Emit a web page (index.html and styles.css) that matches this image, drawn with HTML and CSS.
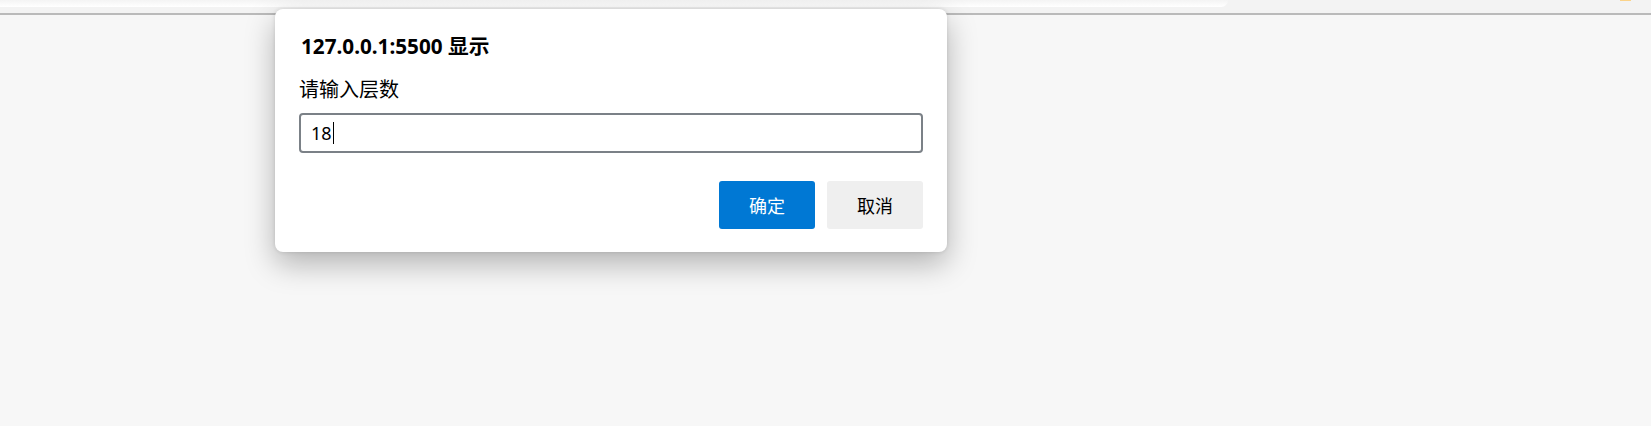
FILE: index.html
```html
<!DOCTYPE html>
<html lang="zh-CN">
<head>
    <meta charset="UTF-8">
    <meta name="viewport" content="width=device-width, initial-scale=1.0">
    <title>层数</title>
    <link rel="stylesheet" href="styles.css">
</head>
<body>
    <div class="topbar">
        <div class="tab-piece"></div>
        <div class="tab-rest"><span class="mark"></span></div>
    </div>
    <div class="page"></div>

    <!-- prompt() dialog -->
    <div class="dialog">
        <div class="dialog-title">127.0.0.1:5500 显示</div>
        <div class="dialog-label">请输入层数</div>
        <div class="dialog-input">
            <span class="value">18</span><span class="caret"></span>
        </div>
        <div class="dialog-buttons">
            <button class="btn btn-ok">确定</button>
            <button class="btn btn-cancel">取消</button>
        </div>
    </div>
</body>
</html>
```

FILE: styles.css
```css
body {
    margin: 0;
    height: 100vh;
    background-color: #f7f7f7;
    font-family: "Noto Sans", "Noto Sans CJK SC", sans-serif;
    overflow: hidden;
}

.topbar {
    display: flex;
    height: 13px;
    border-bottom: 2px solid #bababa;
    background-color: #f3f3f3;
}

.tab-piece {
    width: 1228px;
    height: 7px;
    background: linear-gradient(#f4f4f4, #ffffff);
    border-bottom-right-radius: 8px;
}

.tab-rest {
    flex: 1;
    position: relative;
}

.mark {
    position: absolute;
    left: 392px;
    top: 0;
    width: 11px;
    height: 1px;
    background-color: #fbd38a;
}

.dialog {
    position: absolute;
    left: 275px;
    top: 9px;
    height: 243px;
    box-sizing: border-box;
    width: 672px;
    padding: 0 24px;
    background-color: #ffffff;
    border-radius: 8px;
    box-shadow: 0 12px 30px rgba(0, 0, 0, 0.28), 0 0 4px rgba(0, 0, 0, 0.12);
    display: flex;
    flex-direction: column;
}

.dialog-title {
    margin-top: 24px;
    font-size: 20.7px;
    line-height: 26px;
    font-weight: bold;
    color: #000000;
    padding-left: 2px;
}

.dialog-label {
    margin-top: 18px;
    font-size: 20px;
    line-height: 26px;
    color: #000000;
}

.dialog-input {
    margin-top: 10px;
    height: 40px;
    box-sizing: border-box;
    border: 2px solid #7b8187;
    border-radius: 4px;
    display: flex;
    align-items: center;
    padding-left: 10px;
    font-size: 18px;
    color: #000000;
}

.caret {
    display: inline-block;
    width: 1px;
    height: 22px;
    margin-left: 1px;
    background-color: #000000;
}

.dialog-buttons {
    margin-top: 28px;
    display: flex;
    justify-content: flex-end;
    gap: 12px;
}

.btn {
    width: 96px;
    height: 48px;
    border: none;
    border-radius: 3px;
    font-family: "Noto Sans CJK SC", sans-serif;
    font-size: 18px;
    cursor: pointer;
}

.btn-ok {
    background-color: #0078d4;
    color: #ffffff;
}

.btn-cancel {
    background-color: #efefef;
    color: #000000;
}
```
